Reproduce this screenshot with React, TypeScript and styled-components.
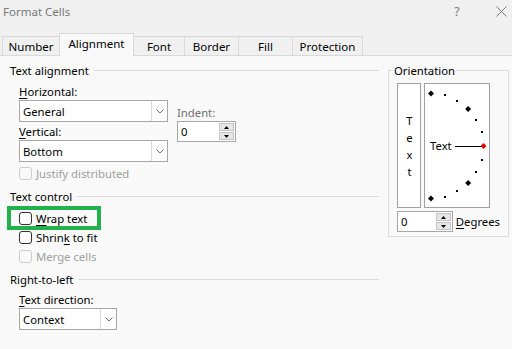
import React from "react";
import styled, { createGlobalStyle } from "styled-components";

const FONT = `"Segoe UI", "Noto Sans", "DejaVu Sans", sans-serif`;

const Global = createGlobalStyle`
  html, body { margin: 0; padding: 0; background: #f0f0f0; }
  body {
    font-family: ${FONT};
    font-size: 11.3px;
    color: #000;
  }
  #root { width: 512px; height: 349px; overflow: hidden; }
`;

const Window = styled.div`
  width: 512px;
  height: 349px;
  display: flex;
  flex-direction: column;
  background: #f0f0f0;
  box-sizing: border-box;
`;

const TitleBar = styled.div`
  height: 22px;
  display: flex;
  align-items: center;
  padding-left: 3px;
  color: #7a7a7a;
  font-size: 11.5px;
`;

const TitleText = styled.span`
  flex: 1;
`;

const HelpButton = styled.span`
  width: 10px;
  text-align: center;
  font-size: 12.5px;
  color: #7a7a7a;
  margin-right: 34px;
`;

const CloseButton = styled.span`
  display: flex;
  margin-right: 5px;
`;

const TabStrip = styled.div`
  margin-top: 11px;
  height: 22px;
  display: flex;
  align-items: flex-end;
  padding-left: 2px;
`;

const Tab = styled.div<{ $w: number; $active?: boolean }>`
  box-sizing: border-box;
  width: ${(p) => p.$w}px;
  height: ${(p) => (p.$active ? 23 : 19)}px;
  margin-bottom: ${(p) => (p.$active ? -1 : 0)}px;
  margin-left: -1px;
  &:first-child { margin-left: 0; }
  border: 1px solid #d9d9d9;
  border-bottom: none;
  background: ${(p) => (p.$active ? "#f9f9f9" : "#f0f0f0")};
  position: relative;
  z-index: ${(p) => (p.$active ? 1 : 0)};
  display: flex;
  align-items: center;
  justify-content: center;
  padding-bottom: ${(p) => (p.$active ? 3 : 0)}px;
  font-size: 11.5px;
  color: #000;
`;

const Panel = styled.div`
  flex: 1;
  background: #f9f9f9;
  border-top: 1px solid #d9d9d9;
  display: flex;
  align-items: flex-start;
  gap: 9px;
  padding: 7px 0 0 10px;
`;

const LeftColumn = styled.div`
  width: 369px;
  display: flex;
  flex-direction: column;
`;

const GroupHeader = styled.div<{ $mt?: number }>`
  display: flex;
  align-items: center;
  gap: 5px;
  height: 15px;
  line-height: 15px;
  margin-top: ${(p) => p.$mt ?? 0}px;
  &::after {
    content: "";
    flex: 1;
    height: 1px;
    background: #dcdcdc;
  }
`;

const GroupBody = styled.div`
  padding-left: 9px;
  display: flex;
  flex-direction: column;
`;

const AlignGrid = styled.div`
  display: flex;
  gap: 9px;
  margin-top: 6px;
`;

const FieldStack = styled.div`
  display: flex;
  flex-direction: column;
  width: 149px;
`;

const IndentStack = styled.div`
  display: flex;
  flex-direction: column;
  margin-top: 21px;
`;

const Label = styled.div<{ $mt?: number; $muted?: boolean }>`
  height: 15px;
  line-height: 15px;
  margin-top: ${(p) => p.$mt ?? 0}px;
  margin-bottom: 1px;
  color: ${(p) => (p.$muted ? "#6f6f6f" : "#000")};
`;

const U = styled.span`
  text-decoration: underline;
  text-underline-offset: 2px;
`;

const SelectBox = styled.div<{ $w: number }>`
  box-sizing: border-box;
  width: ${(p) => p.$w}px;
  height: 22px;
  border: 1px solid #a7a7a7;
  background: #fff;
  display: flex;
  align-items: center;
`;

const SelectValue = styled.span`
  flex: 1;
  padding-left: 3px;
`;

const SelectArrow = styled.span`
  box-sizing: border-box;
  width: 16px;
  height: 100%;
  border-left: 1px solid #d9d9d9;
  display: flex;
  align-items: center;
  justify-content: center;
`;

const Select = ({ value, width }: { value: string; width: number }) => (
  <SelectBox $w={width}>
    <SelectValue>{value}</SelectValue>
    <SelectArrow>
      <svg width="8" height="5" viewBox="0 0 8 5">
        <polyline points="0.5,0.5 4,4 7.5,0.5" fill="none" stroke="#707070" strokeWidth="1" />
      </svg>
    </SelectArrow>
  </SelectBox>
);

const SpinBox = styled.div<{ $w: number }>`
  box-sizing: border-box;
  width: ${(p) => p.$w}px;
  height: 21px;
  border: 1px solid #a7a7a7;
  background: #fff;
  display: flex;
  align-items: center;
`;

const SpinValue = styled.span`
  flex: 1;
  padding-left: 3px;
`;

const SpinButtons = styled.div`
  display: flex;
  flex-direction: column;
  gap: 1px;
  margin-right: 1px;
`;

const SpinButton = styled.div`
  box-sizing: border-box;
  width: 15px;
  height: 8px;
  background: #e6e6e6;
  border: 1px solid #c4c4c4;
  display: flex;
  align-items: center;
  justify-content: center;
`;

const Spin = ({ value, width }: { value: string; width: number }) => (
  <SpinBox $w={width}>
    <SpinValue>{value}</SpinValue>
    <SpinButtons>
      <SpinButton>
        <svg width="5" height="3" viewBox="0 0 5 3"><polygon points="2.5,0 5,3 0,3" fill="#000" /></svg>
      </SpinButton>
      <SpinButton>
        <svg width="5" height="3" viewBox="0 0 5 3"><polygon points="0,0 5,0 2.5,3" fill="#000" /></svg>
      </SpinButton>
    </SpinButtons>
  </SpinBox>
);

const CheckRow = styled.div<{ $disabled?: boolean; $highlight?: boolean; $mt?: number }>`
  position: relative;
  height: 19px;
  display: flex;
  align-items: center;
  gap: 4px;
  margin-top: ${(p) => p.$mt ?? 0}px;
  color: ${(p) => (p.$disabled ? "#a0a0a0" : "#000")};
  ${(p) =>
    p.$highlight
      ? `&::before {
    content: "";
    position: absolute;
    left: -12px;
    top: -3px;
    width: 94px;
    height: 24px;
    box-sizing: border-box;
    border: 4px solid #22b14c;
  }`
      : ""}
`;

const Box = styled.span<{ $disabled?: boolean }>`
  box-sizing: border-box;
  width: 13px;
  height: 13px;
  border-radius: 3px;
  border: 1px solid ${(p) => (p.$disabled ? "#cccccc" : "#333333")};
  background: ${(p) => (p.$disabled ? "#f9f9f9" : "#ffffff")};
`;

const Orientation = styled.fieldset`
  box-sizing: border-box;
  width: 121px;
  margin: 0;
  padding: 5px 8px 4px 8px;
  border: 1px solid #dcdcdc;
  min-inline-size: auto;
`;

const Legend = styled.legend`
  padding: 0 1px;
  margin-left: -4px;
  line-height: 15px;
`;

const OrientRow = styled.div`
  display: flex;
  gap: 3px;
`;

const VerticalBox = styled.div`
  box-sizing: border-box;
  width: 24px;
  height: 125px;
  border: 1px solid #a0a0a0;
  background: #fff;
  display: flex;
  align-items: center;
  justify-content: center;
  padding-top: 3px;
`;

const VerticalText = styled.span`
  writing-mode: vertical-lr;
  text-orientation: upright;
  letter-spacing: 2px;
  font-size: 11.3px;
  line-height: 14px;
`;

const ArcBox = styled.div`
  box-sizing: border-box;
  width: 66px;
  height: 125px;
  border: 1px solid #a0a0a0;
  background: #fff;
  display: flex;
`;

const DegreesRow = styled.div`
  display: flex;
  align-items: center;
  gap: 3px;
  margin-top: 3px;
`;

const Arc = () => {
  const cx = 6;
  const cy = 62;
  const r = 52.5;
  const marks = [];
  for (let a = 90; a >= -90; a -= 15) {
    const rad = (a * Math.PI) / 180;
    const x = cx + r * Math.cos(rad);
    const y = cy - r * Math.sin(rad);
    if (a === 0) continue;
    if (a % 45 === 0) {
      marks.push(
        <polygon
          key={a}
          points={`${x},${y - 3} ${x + 3},${y} ${x},${y + 3} ${x - 3},${y}`}
          fill="#000"
        />
      );
    } else {
      marks.push(<rect key={a} x={Math.round(x) - 1} y={Math.round(y) - 1} width={2} height={2} fill="#000" />);
    }
  }
  const rx = cx + r;
  return (
    <svg width="64" height="123" viewBox="0 0 64 123">
      {marks}
      <text x="5" y={cy + 4} fontSize="11.3" fontFamily={FONT} fill="#000">
        Text
      </text>
      <line x1="30" y1={cy + 0.5} x2={rx - 2} y2={cy + 0.5} stroke="#000" strokeWidth="1" />
      <polygon points={`${rx},${cy - 3} ${rx + 3},${cy} ${rx},${cy + 3} ${rx - 3},${cy}`} fill="#e00000" />
    </svg>
  );
};

const tabs = [
  { name: "Number", w: 58 },
  { name: "Alignment", w: 75, active: true },
  { name: "Font", w: 52 },
  { name: "Border", w: 55 },
  { name: "Fill", w: 55 },
  { name: "Protection", w: 71 },
];

export default function App() {
  return (
    <>
      <Global />
      <Window>
        <TitleBar>
          <TitleText>Format Cells</TitleText>
          <HelpButton>?</HelpButton>
          <CloseButton>
            <svg width="11" height="11" viewBox="0 0 11 11">
              <path d="M0.5 0.5L10.5 10.5M10.5 0.5L0.5 10.5" stroke="#7a7a7a" strokeWidth="1" />
            </svg>
          </CloseButton>
        </TitleBar>
        <TabStrip>
          {tabs.map((t) => (
            <Tab key={t.name} $w={t.w} $active={t.active}>
              {t.name}
            </Tab>
          ))}
        </TabStrip>
        <Panel>
          <LeftColumn>
            <GroupHeader>Text alignment</GroupHeader>
            <GroupBody>
              <AlignGrid>
                <FieldStack>
                  <Label>
                    <U>H</U>orizontal:
                  </Label>
                  <Select value="General" width={149} />
                  <Label $mt={2}>
                    <U>V</U>ertical:
                  </Label>
                  <Select value="Bottom" width={149} />
                </FieldStack>
                <IndentStack>
                  <Label $muted>Indent:</Label>
                  <Spin value="0" width={59} />
                </IndentStack>
              </AlignGrid>
              <CheckRow $disabled $mt={2}>
                <Box $disabled />
                Justify distributed
              </CheckRow>
            </GroupBody>

            <GroupHeader $mt={6}>Text control</GroupHeader>
            <GroupBody>
              <CheckRow $highlight $mt={5}>
                <Box />
                <span>
                  <U>W</U>rap text
                </span>
              </CheckRow>
              <CheckRow>
                <Box />
                <span>
                  Shrin<U>k</U> to fit
                </span>
              </CheckRow>
              <CheckRow $disabled>
                <Box $disabled />
                Merge cells
              </CheckRow>
            </GroupBody>

            <GroupHeader $mt={6}>Right-to-left</GroupHeader>
            <GroupBody>
              <Label $mt={5}>
                <U>T</U>ext direction:
              </Label>
              <Select value="Context" width={98} />
            </GroupBody>
          </LeftColumn>

          <Orientation>
            <Legend>Orientation</Legend>
            <OrientRow>
              <VerticalBox>
                <VerticalText>Text</VerticalText>
              </VerticalBox>
              <ArcBox>
                <Arc />
              </ArcBox>
            </OrientRow>
            <DegreesRow>
              <Spin value="0" width={60} />
              <span>
                <U>D</U>egrees
              </span>
            </DegreesRow>
          </Orientation>
        </Panel>
      </Window>
    </>
  );
}
